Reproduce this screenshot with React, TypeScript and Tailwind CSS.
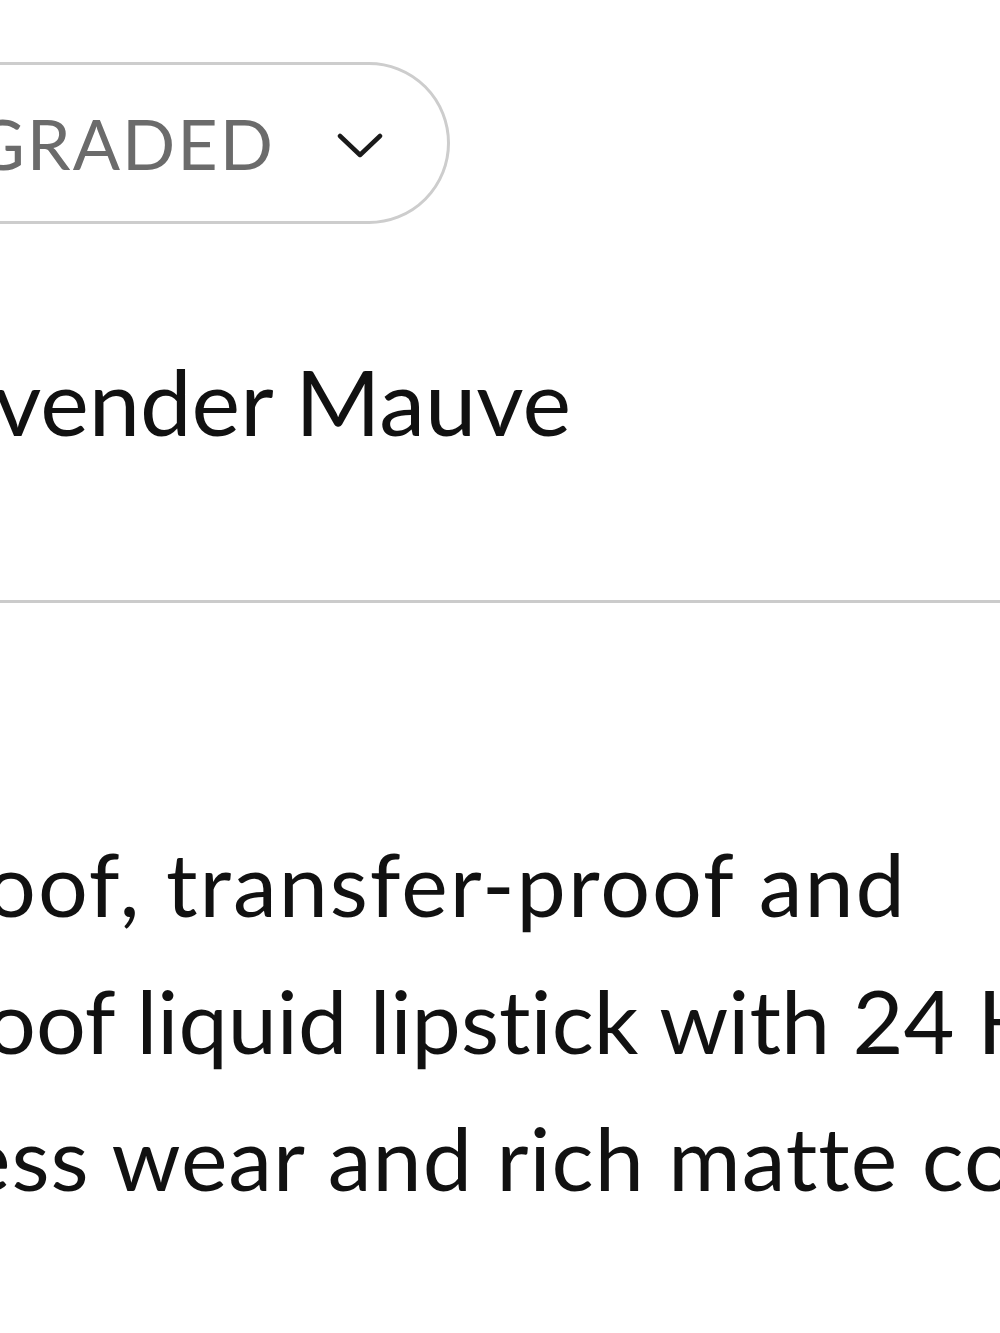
import React from "react";

function Line({ prefix, text, className }: { prefix: string; text: string; className: string }) {
  return (
    <div className={`flex whitespace-nowrap [font-variant-ligatures:none] ${className}`}>
      <span className="flex w-0 justify-end">
        <span className="shrink-0">{prefix}</span>
      </span>
      <span className="shrink-0">{text}</span>
    </div>
  );
}

export default function App() {
  return (
    <div
      className="relative h-[1333px] w-[1000px] overflow-hidden bg-white text-[#111]"
      style={{ fontFamily: "Lato, 'Liberation Sans', sans-serif" }}
    >
      <div className="flex flex-col pt-[62px]">
        {/* Pill selector */}
        <div className="flex">
          <div className="ml-[-350px] flex h-[162px] w-[800px] items-center justify-end gap-[62px] rounded-full border-[3px] border-[#cdcdcd] pr-[64px]">
            <span className="whitespace-nowrap text-[70px] leading-none tracking-[2px] text-[#6b6b6b]">
              UPGRADED
            </span>
            <svg width="46" height="28" viewBox="0 0 46 28" fill="none" className="mt-[6px]">
              <path d="M3 4 L23 23 L43 4" stroke="#1a1a1a" strokeWidth="4.5" strokeLinecap="round" strokeLinejoin="round" />
            </svg>
          </div>
        </div>

        {/* Shade name */}
        <Line prefix="La" text="vender Mauve" className="mt-[131px] ml-[-6px] text-[92px] leading-none" />

        {/* Divider */}
        <div className="mt-[153px] h-[3px] w-full bg-[#cbcbcb]" />

        {/* Description */}
        <div className="mt-[212px] flex flex-col text-[88px] leading-[137px]">
          <Line prefix="Smudge-pr" text="oof, transfer-proof and" className="ml-[-14px] tracking-[2px]" />
          <Line prefix="water-pr" text="oof liquid lipstick with 24 Hour" className="ml-[-14px]" />
          <Line prefix="weightl" text="ess wear and rich matte colour." className="ml-[-36px] tracking-[1px]" />
        </div>
      </div>
    </div>
  );
}
